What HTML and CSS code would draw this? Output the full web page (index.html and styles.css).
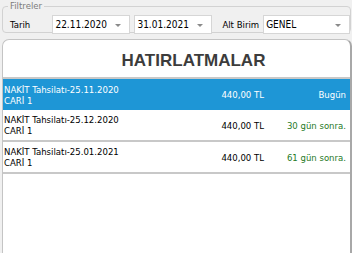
FILE: index.html
```html
<!DOCTYPE html>
<html lang="tr">
<head>
<meta charset="utf-8">
<link rel="stylesheet" href="styles.css">
</head>
<body>
<div class="page">
  <fieldset class="filters">
    <legend>Filtreler</legend>
    <span class="lbl tarih">Tarih</span>
    <div class="combo date">22.11.2020<span class="arrow"></span></div>
    <div class="combo date">31.01.2021<span class="arrow"></span></div>
    <span class="lbl alt">Alt Birim</span>
    <div class="combo unit">GENEL<span class="arrow"></span></div>
  </fieldset>
  <div class="panel">
    <h1 class="title">HATIRLATMALAR</h1>
    <div class="list">
      <div class="row sel">
        <div class="desc">NAKİT Tahsilatı-25.11.2020<br>CARİ 1</div>
        <div class="amt">440,00 TL</div>
        <div class="when">Bugün</div>
      </div>
      <div class="row">
        <div class="desc">NAKİT Tahsilatı-25.12.2020<br>CARİ 1</div>
        <div class="amt">440,00 TL</div>
        <div class="when later">30 gün sonra.</div>
      </div>
      <div class="row">
        <div class="desc">NAKİT Tahsilatı-25.01.2021<br>CARİ 1</div>
        <div class="amt">440,00 TL</div>
        <div class="when later">61 gün sonra.</div>
      </div>
    </div>
  </div>
</div>
</body>
</html>
```
FILE: styles.css
```css
html, body {
  margin: 0;
  padding: 0;
  background: #f0f0f0;
  font-family: "DejaVu Sans Condensed", "DejaVu Sans", sans-serif;
  font-stretch: condensed;
  font-size: 9.5px;
  color: #000;
}
.page {
  width: 352px;
  height: 253px;
  overflow: hidden;
  display: flex;
  flex-direction: column;
}
.filters {
  margin: 1px 1px 0 2px;
  border: 1px solid #d2d2d2;
  border-radius: 4px;
  padding: 4px 0 6px 7px;
  display: flex;
  align-items: center;
  height: 20px;
  min-width: 0;
  white-space: nowrap;
}
.filters legend {
  color: #7c7c7c;
  font-size: 9.5px;
  padding: 0 2px;
  margin-left: -2px;
  line-height: 10px;
}
.tarih { width: 43px; }
.alt { margin: 0 4px 0 6px; }
.combo {
  position: relative;
  box-sizing: border-box;
  height: 19px;
  background: #fff;
  border: 1px solid #d6d6d6;
  padding: 0 0 0 2px;
  display: flex;
  align-items: center;
  font-size: 10px;
}
.date { width: 79px; margin-right: 4px; }
.unit { width: 88px; }
.arrow {
  position: absolute;
  right: 8px;
  top: 8px;
  width: 0;
  height: 0;
  border-left: 3px solid transparent;
  border-right: 3px solid transparent;
  border-top: 3px solid #8a8a8a;
}
.panel {
  margin: 6px 0 0 2px;
  flex: 1;
  background: #fff;
  border: 1px solid #c4c4c4;
  border-right: 2px solid #a8a8a8;
  border-bottom: none;
  border-radius: 7px 7px 0 0;
}
.title {
  margin: 0;
  height: 39px;
  display: flex;
  align-items: center;
  justify-content: center;
  padding-left: 34px;
  padding-top: 5px;
  box-sizing: border-box;
  font-family: "Liberation Sans", Arial, sans-serif;
  font-stretch: normal;
  font-size: 17px;
  font-weight: bold;
  color: #3c3c3c;
  border-bottom: 2px solid #c8c8c8;
}
.row {
  display: grid;
  grid-template-columns: 1fr 90px 86px;
  align-items: center;
  height: 32px;
  box-sizing: border-box;
  border-bottom: 2px solid #c8c8c8;
  font-size: 9.5px;
  line-height: 11px;
}
.row.sel {
  background: #1e96d6;
  color: #fff;
  border-bottom: none;
  height: 31px;
}
.desc { padding-left: 1px; }
.amt { text-align: right; }
.when { text-align: right; padding-right: 4px; }
.later { color: #1f7a1f; }
```
